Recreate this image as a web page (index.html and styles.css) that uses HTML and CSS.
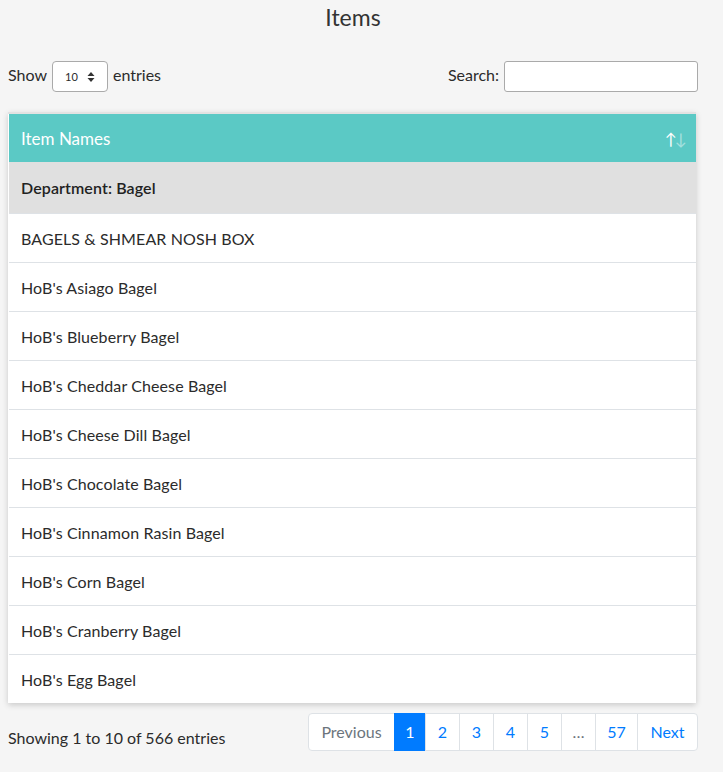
FILE: index.html
```html
<!DOCTYPE html>
<html>
<head>
<meta charset="utf-8">
<link rel="stylesheet" href="styles.css">
</head>
<body>
<h1 class="title">Items</h1>
<div class="controls">
  <label class="length">Show
    <span class="select"><span class="select-val">10</span>
      <svg class="caret" width="8" height="12" viewBox="0 0 8 12"><path d="M4 1 L7.5 5 H0.5 Z M4 11 L7.5 7 H0.5 Z" fill="#333"/></svg>
    </span>
    entries</label>
  <label class="search">Search: <span class="search-input"></span></label>
</div>
<div class="table-wrap">
  <table class="items">
    <thead>
      <tr><th><span>Item Names</span><span class="sort"><span class="up">↑</span><span class="down">↓</span></span></th></tr>
    </thead>
    <tbody>
      <tr class="group"><td>Department: Bagel</td></tr>
      <tr><td>BAGELS &amp; SHMEAR NOSH BOX</td></tr>
      <tr><td>HoB's Asiago Bagel</td></tr>
      <tr><td>HoB's Blueberry Bagel</td></tr>
      <tr><td>HoB's Cheddar Cheese Bagel</td></tr>
      <tr><td>HoB's Cheese Dill Bagel</td></tr>
      <tr><td>HoB's Chocolate Bagel</td></tr>
      <tr><td>HoB's Cinnamon Rasin Bagel</td></tr>
      <tr><td>HoB's Corn Bagel</td></tr>
      <tr><td>HoB's Cranberry Bagel</td></tr>
      <tr><td>HoB's Egg Bagel</td></tr>
    </tbody>
  </table>
</div>
<div class="footer">
  <div class="info">Showing 1 to 10 of 566 entries</div>
  <ul class="pagination">
    <li class="disabled w-prev">Previous</li>
    <li class="active w-1">1</li>
    <li class="w-n">2</li>
    <li class="w-n">3</li>
    <li class="w-n">4</li>
    <li class="w-n">5</li>
    <li class="disabled w-n">…</li>
    <li class="w-57">57</li>
    <li class="w-next">Next</li>
  </ul>
</div>
</body>
</html>
```
FILE: styles.css
```css
html, body { margin: 0; padding: 0; }
body {
  background: #f5f5f5;
  font-family: "Lato", "Open Sans", sans-serif;
  color: #2b2b2b;
  font-size: 16px;
  padding: 0 25px 0 8px;
  width: 690px;
}
.title {
  margin: 0;
  padding-top: 3px;
  height: 38px;
  text-align: center;
  font-weight: 400;
  font-size: 23px;
  line-height: 28px;
  color: #333;
}
.controls {
  display: flex;
  justify-content: space-between;
  align-items: center;
  height: 35px;
  margin-top: 18px;
}
.length, .search {
  display: flex;
  align-items: center;
  gap: 5px;
  margin-top: -5px;
}
.select {
  display: inline-flex;
  align-items: center;
  justify-content: space-between;
  box-sizing: border-box;
  width: 56px;
  height: 31px;
  padding: 0 12px 0 12px;
  border: 1px solid #aaa;
  border-radius: 4px;
  background: #fff;
  font-size: 11px;
  margin-top: 5px;
}
.search-input {
  display: inline-block;
  box-sizing: border-box;
  width: 194px;
  height: 31px;
  border: 1px solid #aaa;
  border-radius: 3px;
  background: #fff;
  margin-top: 5px;
}
.table-wrap {
  margin-top: 18px;
  width: 688px;
  border-top: 2px solid #e2e2e2;
  box-shadow: 0 2px 6px rgba(0,0,0,0.18);
  background: #fff;
}
.items {
  width: 687px;
  border-collapse: collapse;
  margin-left: 1px;
}
.items th {
  background: #5bc9c5;
  color: #fff;
  font-weight: 400;
  font-size: 17px;
  text-align: left;
  height: 48px;
  padding: 0 9px 0 12px;
  display: flex;
  align-items: center;
  justify-content: space-between;
  box-sizing: border-box;
}
.sort { font-size: 16px; letter-spacing: -2px; padding-right: 2px; }
.sort .down { opacity: 0.45; }
.items td {
  height: 48px;
  padding: 0 12px;
  border-top: 1px solid #dee2e6;
  font-size: 16px;
  letter-spacing: 0.1px;
}
.items tr.group td {
  background: #e0e0e0;
  height: 51px;
  border-top: none;
  font-weight: 600;
  color: #222;
}
.footer {
  display: flex;
  justify-content: space-between;
  align-items: center;
  margin-top: 10px;
  width: 690px;
}
.info { padding-top: 10px; }
.pagination {
  display: flex;
  list-style: none;
  margin: 0;
  padding: 0;
}
.pagination li {
  box-sizing: border-box;
  height: 38px;
  line-height: 36px;
  text-align: center;
  border: 1px solid #dee2e6;
  margin-left: -1px;
  background: #fff;
  color: #007bff;
}
.pagination .w-prev { width: 87px; }
.pagination .w-1 { width: 32px; }
.pagination .w-n { width: 35px; }
.pagination .w-57 { width: 43px; }
.pagination .w-next { width: 61px; }
.pagination li:first-child { border-radius: 4px 0 0 4px; margin-left: 0; }
.pagination li:last-child { border-radius: 0 4px 4px 0; }
.pagination li.disabled { color: #6c757d; }
.pagination li.active { background: #007bff; border-color: #007bff; color: #fff; }
```
